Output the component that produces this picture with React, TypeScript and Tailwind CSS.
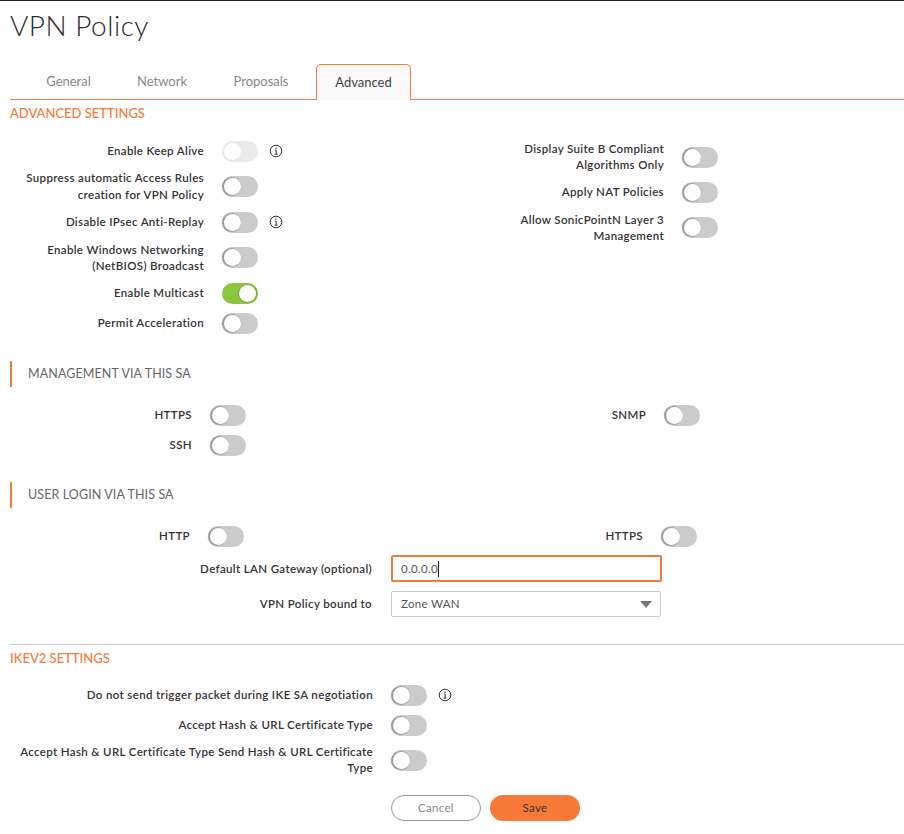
import React from 'react'

const font = "font-['Lato','Noto_Sans',sans-serif]"

const Toggle = ({ on = false, faded = false }: { on?: boolean; faded?: boolean }) => {
  const track = on ? 'bg-[#8cc63f]' : faded ? 'bg-[#eaeaea]' : 'bg-[#cbcbcb]'
  const ring = on ? 'shadow-[0_0_1px_1px_#74a52c]' : faded ? 'shadow-[0_0_1px_#ddd]' : 'shadow-[-1px_0_1px_1px_#999]'
  return (
    <span className={`flex h-[21px] w-[36px] shrink-0 items-center rounded-full ${track} ${on ? 'justify-end' : 'justify-start'}`}>
      <span className={`h-[17px] w-[17px] rounded-full bg-white ${on ? 'mr-[2px]' : 'ml-[2px]'} ${ring}`} />
    </span>
  )
}

const Info = () => (
  <svg width="14" height="14" viewBox="0 0 14 14" fill="none" className="ml-[11px] shrink-0">
    <circle cx="7" cy="7" r="5.8" stroke="#333" strokeWidth="1" />
    <path d="M5.8 6.2H7.2V10M5.6 10.2H8.6" stroke="#333" strokeWidth="1" />
    <rect x="6.4" y="3.6" width="1.3" height="1.3" fill="#333" />
  </svg>
)

type RowProps = { label: string; labelWidth: string; on?: boolean; faded?: boolean; info?: boolean; tight?: boolean; cls?: string }

const Row = ({ label, labelWidth, on, faded, info, tight, cls }: RowProps) => (
  <div className={`flex items-center ${cls ?? ''}`}>
    <div className={`${labelWidth} shrink-0 text-right text-[11.5px] font-semibold tracking-[0.35px] text-[#333] ${tight ? 'leading-[16px]' : 'leading-[16.5px]'}`}>{label}</div>
    <div className="ml-[18px]">
      <Toggle on={on} faded={faded} />
    </div>
    {info && <Info />}
  </div>
)

const SubHeading = ({ children }: { children: React.ReactNode }) => (
  <div className="flex h-[26px] items-center border-l-2 border-[#f47a3c] pl-[16px] text-[12.5px] tracking-[0.1px] text-[#666]">{children}</div>
)

const App = () => {
  return (
    <div className={`h-[834px] w-[904px] overflow-hidden border-t border-[#222] bg-white ${font}`}>
      <h1 className="pt-[6px] pl-[10px] text-[28px] leading-[36px] font-light tracking-[0.5px] text-[#2b2b2b]">VPN Policy</h1>

      {/* tabs */}
      <div className="ml-[10px] mt-[21px] flex h-[36px] items-end border-b border-[#f0804a] text-[13px] text-[#888]">
        <div className="flex h-[35px] w-[106px] items-center justify-center pl-[11px]">General</div>
        <div className="flex h-[35px] w-[90px] items-center justify-center pl-[2px]">Network</div>
        <div className="flex h-[35px] w-[110px] items-center justify-center">Proposals</div>
        <div className="-mb-px flex h-[36px] w-[95px] items-center justify-center rounded-t-[5px] border border-b-0 border-[#f47a3c] bg-[#f9f9f9] text-[#444]">Advanced</div>
      </div>

      <div className="pl-[10px] pt-[4px] text-[13px] leading-[18px] font-medium text-[#f47a3c]">ADVANCED SETTINGS</div>

      {/* advanced settings */}
      <div className="mt-[19px] flex h-[205px]">
        <div className="flex w-[460px] flex-col">
          <Row label="Enable Keep Alive" labelWidth="w-[204px]" faded info cls="h-[20px]" />
          <Row label="Suppress automatic Access Rules creation for VPN Policy" labelWidth="w-[204px]" cls="mt-[9px] h-[33px]" />
          <Row label="Disable IPsec Anti-Replay" labelWidth="w-[204px]" info cls="mt-[9px] h-[20px]" />
          <Row label="Enable Windows Networking (NetBIOS) Broadcast" labelWidth="w-[204px]" tight cls="mt-[9px] h-[33px]" />
          <Row label="Enable Multicast" labelWidth="w-[204px]" on cls="mt-[9px] h-[20px]" />
          <Row label="Permit Acceleration" labelWidth="w-[204px]" cls="mt-[10px] h-[20px]" />
        </div>
        <div className="flex w-[258px] flex-col items-end">
          <Row label="Display Suite B Compliant Algorithms Only" labelWidth="w-[160px]" tight cls="h-[32px]" />
          <Row label="Apply NAT Policies" labelWidth="w-[160px]" cls="mt-[9px] h-[20px]" />
          <Row label="Allow SonicPointN Layer 3 Management" labelWidth="w-[160px]" tight cls="mt-[9px] h-[33px]" />
        </div>
      </div>

      {/* management */}
      <div className="ml-[10px] mt-[15px]">
        <SubHeading>MANAGEMENT VIA THIS SA</SubHeading>
      </div>
      <div className="mt-[18px] flex">
        <div className="flex w-[454px] flex-col gap-[10px]">
          <Row label="HTTPS" labelWidth="w-[192px]" cls="h-[20px]" />
          <Row label="SSH" labelWidth="w-[192px]" cls="h-[20px]" />
        </div>
        <Row label="SNMP" labelWidth="w-[192px]" cls="h-[20px]" />
      </div>

      {/* user login */}
      <div className="ml-[10px] mt-[27px]">
        <SubHeading>USER LOGIN VIA THIS SA</SubHeading>
      </div>
      <div className="mt-[18px] flex">
        <div className="w-[453px]">
          <Row label="HTTP" labelWidth="w-[190px]" cls="h-[20px]" />
        </div>
        <Row label="HTTPS" labelWidth="w-[190px]" cls="h-[20px]" />
      </div>

      <div className="mt-[9px] flex items-center">
        <div className="w-[372px] text-right text-[11.5px] font-semibold tracking-[0.35px] text-[#333]">Default LAN Gateway (optional)</div>
        <div className="ml-[19px] flex h-[27px] w-[271px] items-center rounded-[2px] border-2 border-[#f47a3c] pl-[8px] text-[11.5px] tracking-[0.3px] text-[#555]">
          0.0.0.0<span className="h-[16px] w-px bg-[#222]" />
        </div>
      </div>
      <div className="mt-[9px] flex items-center">
        <div className="w-[372px] text-right text-[11.5px] font-semibold tracking-[0.35px] text-[#333]">VPN Policy bound to</div>
        <div className="ml-[19px] flex h-[26px] w-[270px] items-center justify-between rounded-[2px] border border-[#ccc] pr-[8px] pl-[9px] text-[11.5px] tracking-[0.3px] text-[#555]">
          Zone WAN
          <span className="h-0 w-0 border-x-[6.5px] border-t-[7px] border-x-transparent border-t-[#777]" />
        </div>
      </div>

      {/* ikev2 */}
      <div className="ml-[10px] mt-[27px] border-t border-[#ccc] pt-[4px] text-[13px] leading-[18px] font-medium text-[#f47a3c]">IKEV2 SETTINGS</div>
      <div className="mt-[18px] flex flex-col">
        <Row label="Do not send trigger packet during IKE SA negotiation" labelWidth="w-[373px]" info cls="h-[20px]" />
        <Row label="Accept Hash & URL Certificate Type" labelWidth="w-[373px]" cls="mt-[10px] h-[20px]" />
        <Row label="Accept Hash & URL Certificate Type Send Hash & URL Certificate Type" labelWidth="w-[373px]" tight cls="mt-[9px] h-[32px]" />
      </div>

      <div className="ml-[391px] mt-[19px] flex gap-[9px] text-[11.5px] tracking-[0.3px]">
        <button className="h-[26px] w-[90px] rounded-full border border-[#999] bg-white text-[#888]">Cancel</button>
        <button className="h-[26px] w-[90px] rounded-full bg-[#f97938] text-[#333]">Save</button>
      </div>
    </div>
  )
}

export default App
